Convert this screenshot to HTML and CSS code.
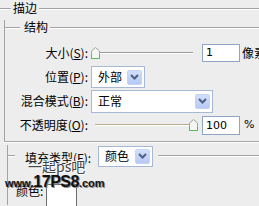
FILE: index.html
```html
<!DOCTYPE html>
<html>
<head>
<meta charset="utf-8">
<link rel="stylesheet" href="styles.css">
</head>
<body>
<div class="panel">
  <div class="title-row outer-title">
    <span class="line lead-outer"></span><span class="ttl">描边</span><span class="line fill"></span>
  </div>
  <div class="group struct">
    <div class="title-row struct-title">
      <span class="line lead-struct"></span><span class="ttl">结构</span><span class="line fill"></span>
    </div>
    <div class="rows">
      <div class="row">
        <span class="lbl">大小(<u>S</u>):</span>
        <div class="slider s1">
          <svg class="thumb" width="9" height="12" viewBox="0 0 9 12"><path d="M4.5 0.5 L8.5 4 L8.5 11.5 L0.5 11.5 L0.5 4 Z" fill="#f4f6f4" stroke="#9aa89a"/><path d="M0.5 8 L0.5 11.5 L8.5 11.5 L8.5 8" fill="none" stroke="#5cb85c"/></svg>
          <span class="track t1"></span>
        </div>
        <div class="num n1">1</div>
        <span class="unit">像素</span>
      </div>
      <div class="row">
        <span class="lbl">位置(<u>P</u>):</span>
        <div class="select sel-pos"><span class="val">外部</span><span class="arrow"><svg width="9" height="6" viewBox="0 0 9 6"><path d="M1 1 L4.5 4.5 L8 1" fill="none" stroke="#4d6185" stroke-width="2"/></svg></span></div>
      </div>
      <div class="row">
        <span class="lbl">混合模式(<u>B</u>):</span>
        <div class="select sel-blend"><span class="val">正常</span><span class="arrow"><svg width="9" height="6" viewBox="0 0 9 6"><path d="M1 1 L4.5 4.5 L8 1" fill="none" stroke="#4d6185" stroke-width="2"/></svg></span></div>
      </div>
      <div class="row">
        <span class="lbl">不透明度(<u>O</u>):</span>
        <div class="slider s4">
          <span class="track t4"></span>
          <svg class="thumb" width="9" height="12" viewBox="0 0 9 12"><path d="M4.5 0.5 L8.5 4 L8.5 11.5 L0.5 11.5 L0.5 4 Z" fill="#f4f6f4" stroke="#9aa89a"/><path d="M0.5 8 L0.5 11.5 L8.5 11.5 L8.5 8" fill="none" stroke="#5cb85c"/></svg>
        </div>
        <div class="num n4">100</div>
        <span class="unit pct">%</span>
      </div>
    </div>
  </div>
  <div class="group fillgroup">
    <div class="title-row fill-title">
      <span class="line lead-fill"></span>
      <span class="ttl fill-ttl">填充类型(<u>F</u>):</span>
      <div class="select sel-fill"><span class="val">颜色</span><span class="arrow"><svg width="9" height="6" viewBox="0 0 9 6"><path d="M1 1 L4.5 4.5 L8 1" fill="none" stroke="#4d6185" stroke-width="2"/></svg></span></div>
      <span class="line fill"></span>
    </div>
    <div class="color-row">
      <span class="lbl2">颜色:</span>
      <span class="swatch"></span>
    </div>
  </div>
  <div class="watermark">
    <div class="wm1">一起ps吧</div>
    <div class="wm2"><span class="small">www.</span><span class="big">17PS8</span><span class="small">.com</span></div>
  </div>
</div>
</body>
</html>
```
FILE: styles.css
```css
html, body {
  margin: 0;
  padding: 0;
  background: #ededed;
}
.panel {
  position: relative;
  width: 259px;
  height: 206px;
  overflow: hidden;
  background: #ededed;
  font-family: "Noto Sans CJK SC", "Noto Sans", sans-serif;
  font-size: 12px;
  line-height: 14px;
  color: #000;
}
u { text-decoration: underline; text-underline-offset: 1px; }
.title-row {
  display: flex;
  align-items: center;
  height: 14px;
  white-space: nowrap;
}
.outer-title { height: 16px; }
.line {
  height: 1px;
  background: #a3a3a3;
  box-shadow: 0 1px 0 #fff;
  flex-shrink: 0;
}
.line.fill { flex: 1; }
.lead-outer { width: 11px; margin-right: 2px; }
.outer-title .ttl { margin-right: 2px; }
.group {
  border-left: 1px solid #a3a3a3;
}
.struct {
  margin-left: 4px;
  margin-top: 11px;
  border-bottom: 1px solid #a3a3a3;
  box-shadow: 0 1px 0 #fff;
  padding-bottom: 4px;
}
.struct-title { margin-top: -7px; }
.lead-struct { width: 15px; margin-right: 4px; }
.struct-title .ttl { margin-right: 2px; }
.rows { padding-top: 7px; }
.row {
  display: flex;
  align-items: center;
  height: 24px;
  white-space: nowrap;
}
.lbl {
  width: 83px;
  flex-shrink: 0;
  text-align: right;
}
.slider {
  display: flex;
  align-items: center;
  flex-shrink: 0;
}
.s1 { margin-left: 3px; margin-top: -1px; }
.s4 { margin-left: 7px; }
.thumb { display: block; flex-shrink: 0; }
.track {
  display: block;
  height: 1px;
}
.t1 {
  width: 93px;
  background: #9b9b9b;
  box-shadow: 0 1px 0 #fff;
  margin-top: -1px;
}
.t4 {
  width: 94px;
  background: #b9ab8c;
  box-shadow: 0 1px 0 #fff;
  margin-top: -2px;
}
.num {
  flex-shrink: 0;
  box-sizing: border-box;
  width: 38px;
  background: #fff;
  border: 1px solid #8fa5c4;
  font-family: "DejaVu Sans", "Liberation Sans", sans-serif;
  font-size: 11px;
  line-height: 16px;
  padding-left: 3px;
}
.n1 { height: 18px; margin-left: 9px; }
.n4 { height: 19px; margin-left: 4px; line-height: 17px; margin-top: 1px; }
.unit { margin-left: 2px; flex-shrink: 0; }
.pct {
  margin-left: 4px;
  font-family: "DejaVu Sans", "Liberation Sans", sans-serif;
  font-size: 11px;
}
.select {
  flex-shrink: 0;
  box-sizing: border-box;
  display: flex;
  align-items: center;
  justify-content: space-between;
  background: #fff;
  border: 1px solid #a6b8d4;
  padding-left: 6px;
  padding-right: 2px;
}
.sel-pos { width: 54px; height: 22px; margin-left: 3px; }
.sel-blend { width: 122px; height: 23px; margin-left: 3px; }
.arrow {
  box-sizing: border-box;
  width: 15px;
  height: 15px;
  background: linear-gradient(#d3e0fb, #b6c9f3);
  border: 1px solid #c4d3f1;
  border-radius: 2px;
  display: flex;
  align-items: center;
  justify-content: center;
}
.arrow svg { display: block; }
.fillgroup {
  margin-left: 7px;
  margin-top: 14px;
  height: 60px;
}
.fill-title {
  margin-top: -11px;
  height: 22px;
}
.lead-fill { width: 7px; margin-right: 10px; align-self: flex-start; margin-top: 10px; }
.fill-title .line.fill { align-self: flex-start; margin-top: 10px; }
.fill-ttl { margin-top: 3px; }
.sel-fill {
  width: 55px;
  height: 21px;
  margin-left: 7px;
  margin-right: 5px;
  padding-left: 6px;
}
.color-row {
  display: flex;
  align-items: flex-start;
  margin-top: 17px;
}
.lbl2 { margin-left: 8px; }
.swatch {
  display: block;
  margin-left: 3px;
  width: 31px;
  height: 26px;
  box-sizing: border-box;
  background: #fff;
  border: 1px solid #6d6d6d;
}
.watermark {
  position: absolute;
  left: 5px;
  top: 158px;
  white-space: nowrap;
}
.wm1 {
  margin-left: 23px;
  font-size: 14px;
  line-height: 16px;
  color: #444;
  text-shadow: 0 0 1px #fff, 1px 1px 0 #fff, -1px -1px 0 #f4f4f4;
}
.wm2 {
  margin-top: 1px;
  font-family: "Liberation Sans", Arial, sans-serif;
  font-weight: bold;
  color: #111;
  text-shadow: 1px 1px 0 #8a8a8a;
  line-height: 14px;
}
.wm2 .small { font-size: 11px; }
.wm2 .big { font-size: 16px; letter-spacing: -0.5px; }
```
